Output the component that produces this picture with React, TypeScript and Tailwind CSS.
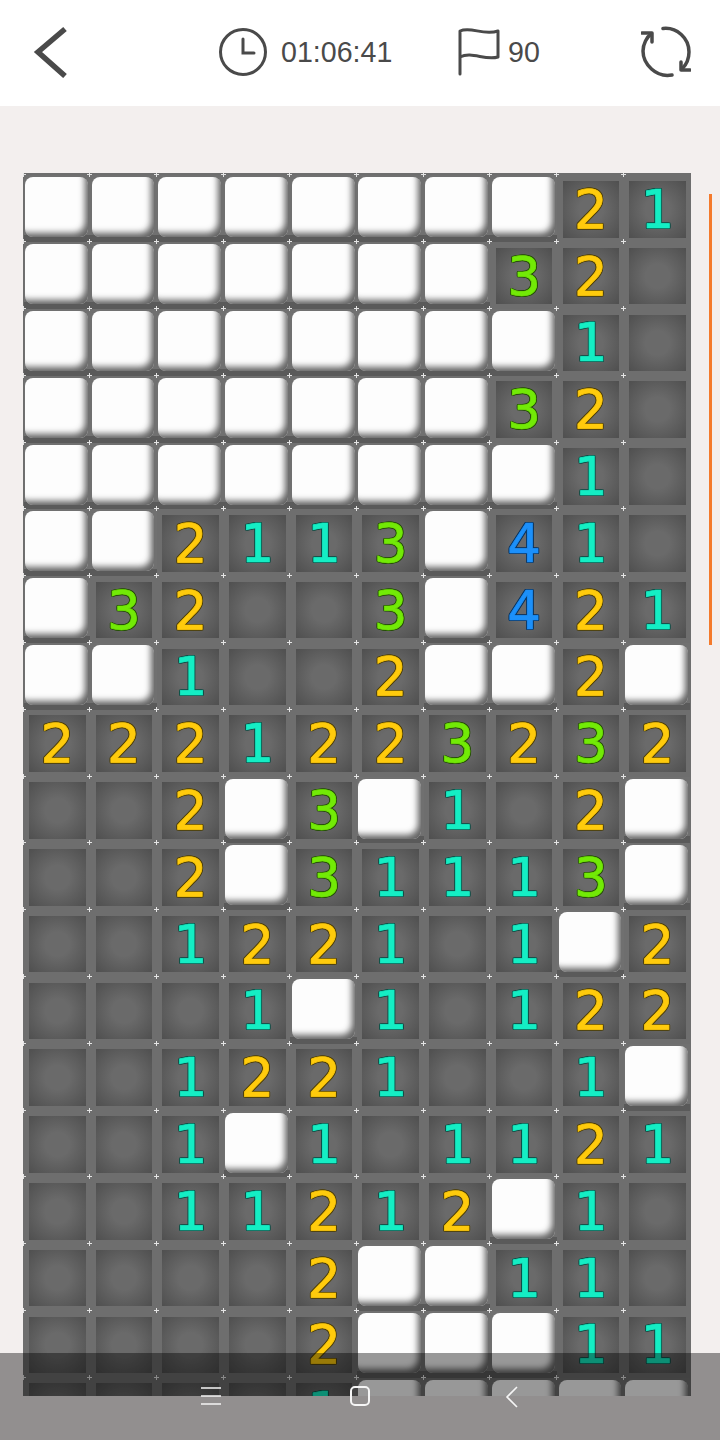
import React from "react";

const BOARD = [
  "WWWWWWWW21",
  "WWWWWWW32E",
  "WWWWWWWW1E",
  "WWWWWWW32E",
  "WWWWWWWW1E",
  "WW2113W41E",
  "W32EE3W421",
  "WW1EE2WW2W",
  "2221223232",
  "EE2W3W1E2W",
  "EE2W31113W",
  "EE1221E1W2",
  "EEE1W1E122",
  "EE1221EE1W",
  "EE1W1E1121",
  "EE11212W1E",
  "EEEE2WW11E",
  "EEEE2WWW11",
  "EEEE1WWWWW",
];

const DIGIT: Record<string, string> = {
  "1": "text-[#14eec4] [-webkit-text-stroke:0.7px_#14eec4] [text-shadow:1.2px_0_0_#0f4f47,-1.2px_0_0_#0f4f47,0_1.2px_0_#0f4f47,0_-1.2px_0_#0f4f47,1px_1px_0_#0f4f47,-1px_1px_0_#0f4f47,1px_-1px_0_#0f4f47,-1px_-1px_0_#0f4f47]",
  "2": "text-[#ffcb0c] [-webkit-text-stroke:0.7px_#ffcb0c] [text-shadow:1.2px_0_0_#4f4008,-1.2px_0_0_#4f4008,0_1.2px_0_#4f4008,0_-1.2px_0_#4f4008,1px_1px_0_#4f4008,-1px_1px_0_#4f4008,1px_-1px_0_#4f4008,-1px_-1px_0_#4f4008]",
  "3": "text-[#72ea06] [-webkit-text-stroke:0.7px_#72ea06] [text-shadow:1.2px_0_0_#274f08,-1.2px_0_0_#274f08,0_1.2px_0_#274f08,0_-1.2px_0_#274f08,1px_1px_0_#274f08,-1px_1px_0_#274f08,1px_-1px_0_#274f08,-1px_-1px_0_#274f08]",
  "4": "text-[#1c90fa] [-webkit-text-stroke:0.7px_#1c90fa] [text-shadow:1.2px_0_0_#0c3560,-1.2px_0_0_#0c3560,0_1.2px_0_#0c3560,0_-1.2px_0_#0c3560,1px_1px_0_#0c3560,-1px_1px_0_#0c3560,1px_-1px_0_#0c3560,-1px_-1px_0_#0c3560]",
};

function Plus() {
  return (
    <>
      <span className="absolute left-[-3px] top-[-1px] h-px w-[5px] bg-[#e4e4e4]" />
      <span className="absolute left-[-1px] top-[-3px] h-[5px] w-px bg-[#e4e4e4]" />
    </>
  );
}

function Cell({ v }: { v: string }) {
  if (v === "W") {
    return (
      <div className="relative h-[66.8px] bg-[#707070]">
        <div className="absolute inset-x-0 bottom-0 h-[7px] bg-[#5a5a5a]" />
        <div className="relative ml-[1.5px] mt-[2px] h-[60px] w-[62.8px] rounded-[8px] bg-[#fdfdfd] shadow-[inset_-6px_-7px_6px_-3px_rgba(60,60,60,0.8)]" />
        <Plus />
      </div>
    );
  }
  return (
    <div className="relative h-[66.8px] bg-[#6e6e6e] pl-[5.5px] pt-[5.7px]">
      <div className="flex h-[56.5px] w-[56.5px] items-center justify-center bg-[radial-gradient(circle,#6a6a6a_30%,#4f4f4f_100%)]">
        {v !== "E" && (
          <span className={`font-['DejaVu_Sans',sans-serif] text-[53px] leading-none ${DIGIT[v]}`}>{v}</span>
        )}
      </div>
      <Plus />
    </div>
  );
}

export default function App() {
  return (
    <div className="relative h-[1440px] w-[720px] overflow-hidden bg-[#f3efee] font-['Liberation_Sans',sans-serif]">
      <header className="relative h-[106px] bg-white text-[#4a4a4a]">
        <div className="flex h-[104px] items-center">
          <svg width="36" height="52" viewBox="0 0 36 52" className="ml-[32px]" fill="none" stroke="#4a4a4a" strokeWidth="5.5">
            <path d="M33 3 L6 26 L33 50" strokeLinejoin="miter" />
          </svg>
          <svg width="50" height="50" viewBox="0 0 50 50" className="ml-[150px]" fill="none" stroke="#4a4a4a" strokeWidth="3" strokeLinecap="round">
            <circle cx="25" cy="25" r="22.5" />
            <path d="M25 12 V26 H36" />
          </svg>
          <span className="ml-[13px] w-[112px] text-[28.6px] leading-none">01:06:41</span>
          <svg width="44" height="50" viewBox="0 0 44 50" className="ml-[64px]" fill="none" stroke="#4a4a4a" strokeWidth="3" strokeLinecap="round" strokeLinejoin="round">
            <path d="M3 47 V4 C14 -1 26 9 41 4 V30 C28 34 15 24 3 30" />
          </svg>
          <span className="ml-[7px] w-[33px] text-[28.6px] leading-none">90</span>
          <svg width="50" height="52" viewBox="0 0 50 52" className="ml-[100px]" fill="none" stroke="#4a4a4a" strokeWidth="3.5" strokeLinecap="round" strokeLinejoin="round">
            <path d="M22 2.5 C36 1 48 12 48 26 C48 33 45 39 41 43" />
            <path d="M31 49 C15 52 2 38 2 25 C2 18 6 11 10 8" />
            <path d="M1 7 L11 7 L11 16" />
            <path d="M40 36 L40 44 L49 44" />
          </svg>
        </div>
      </header>
      <main className="ml-[23px] mt-[67px] h-[1223px] w-[667.5px] overflow-hidden bg-[#6e6e6e] pl-[0.5px] pt-[2.4px]">
        <div className="grid grid-cols-[repeat(10,66.7px)]">
          {BOARD.flatMap((row, r) =>
            row.split("").map((v, c) => <Cell key={`${r}-${c}`} v={v} />)
          )}
        </div>
      </main>
      <div className="absolute left-[709px] top-[194px] h-[451px] w-[3px] bg-[#f47a2c]" />
      <nav className="absolute inset-x-0 bottom-0 h-[87px] bg-[rgba(0,0,0,0.4)]">
        <svg width="22" height="20" viewBox="0 0 22 20" className="absolute left-[200px] top-[33px]" fill="none" stroke="#f5f5f5" strokeWidth="1.5">
          <path d="M1 2 H21 M1 10 H21 M1 18 H21" />
        </svg>
        <svg width="22" height="22" viewBox="0 0 22 22" className="absolute left-[349px] top-[32px]" fill="none" stroke="#f5f5f5" strokeWidth="2">
          <rect x="2" y="2" width="18" height="18" rx="4" />
        </svg>
        <svg width="14" height="22" viewBox="0 0 14 22" className="absolute left-[505px] top-[33px]" fill="none" stroke="#f5f5f5" strokeWidth="1.6">
          <path d="M12 1 L2 11 L12 21" />
        </svg>
      </nav>
    </div>
  );
}
